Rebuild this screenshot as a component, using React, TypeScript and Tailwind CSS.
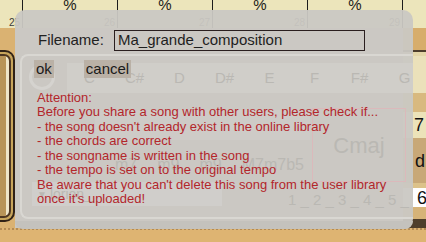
const cells = ["25", "26", "27", "28", "29"];
const chords = ["C", "C#", "D", "D#", "E", "F", "F#", "G"];
const notes = [
  "Attention:",
  "Before you share a song with other users, please check if...",
  "- the song doesn't already exist in the online library",
  "- the chords are correct",
  "- the songname is written in the song",
  "- the tempo is set on to the original tempo",
  "Be aware that you can't delete this song from the user library",
  "once it's uploaded!",
];

function TopRuler() {
  return (
    <div className="flex h-[28px] overflow-hidden bg-[#ece5bb]">
      <div className="-ml-[72px] flex">
        {cells.map((n) => (
          <div
            key={n}
            className="flex h-[28px] w-[95px] shrink-0 flex-col border-r border-[#1c1c1c]"
          >
            <span className="-mt-[3px] text-center text-[15px] leading-[15px] text-[#1a1a1a]">
              %
            </span>
            <span className="mr-[2px] mt-auto self-end text-[10px] leading-[10px] text-[#3a3a3a]">
              {n}
            </span>
          </div>
        ))}
      </div>
    </div>
  );
}

function LeftFrame() {
  return (
    <div className="flex w-[15px] flex-col bg-[#dab272]">
      <div className="h-[22px]" />
      <div className="h-[172px] w-[15px] rounded-r-[10px] border-y-2 border-r-2 border-[#2f2116] bg-[#c8a55b] py-[2px] pr-[2px]">
        <div className="h-full w-full rounded-r-[7px] border-y-2 border-r-2 border-[#4e3722] bg-[#efe6c9] pr-[2px]">
          <div className="h-full w-[6px] bg-[#b89458]" />
        </div>
      </div>
    </div>
  );
}

function RightColumn() {
  return (
    <div className="flex w-[23px] flex-col text-[18px] leading-none text-[#111]">
      <div className="h-[22px] bg-[#d7ad6b]" />
      <div className="h-[2px] bg-[#4d3d2c]" />
      <div className="h-[4px] bg-[#e4d6a8]" />
      <div className="h-[37px] bg-[#ebe1ba]" />
      <div className="h-[19px] bg-[#d8b97f]" />
      <div className="flex h-[26px] items-center bg-[#ece3b9] pl-[11px]">7</div>
      <div className="flex h-[45px] items-center bg-[#c8a877] pl-[12px]">d</div>
      <div className="h-[5px] bg-[#dcc28a]" />
      <div className="flex h-[19px] items-center bg-white pl-[14px]">6</div>
      <div className="h-[12px] bg-[#d6b378]" />
      <div className="h-[9px] bg-[#4e3e2c]" />
    </div>
  );
}

function GhostLayer() {
  return (
    <div className="pointer-events-none absolute inset-0 overflow-hidden whitespace-nowrap text-[#bab8b3]">
      <div className="absolute left-[7px] top-[8px] h-[26px] w-[26px] rounded-full border-[3px] border-[#d5d3cf]" />
      <div className="absolute left-[45px] right-0 top-[7px] flex h-[30px] items-center bg-[#d0cec9]">
        {chords.map((c) => (
          <span key={c} className="w-[45px] shrink-0 text-center text-[15px]">
            {c}
          </span>
        ))}
      </div>
      <div className="absolute left-[73px] top-[54px] h-[30px] w-[215px] bg-[#cecbc7]" />
      <div className="absolute left-[93px] top-[101px] flex gap-[20px] text-[16px] leading-none">
        <span>m7</span>
        <span>m9</span>
        <span>m9</span>
        <span>M7m7b5</span>
      </div>
      <div className="absolute left-[290px] top-[52px] flex h-[74px] w-[94px] items-center justify-center border-[1.5px] border-[#dbb9bb] text-[22px]">
        Cmaj
      </div>
      <div className="absolute left-[10px] top-[126px] flex h-[24px] w-[190px] items-center gap-[3px] bg-[#d0cecb] pl-[5px] text-[14px]">
        <span className="text-[10px]">▼</span>
        <span>lorion_</span>
      </div>
      <div className="absolute left-[266px] top-[136px] text-[15px] leading-none">
        1 _ 2 _ 3 _ 4 _ 5 _
      </div>
    </div>
  );
}

function ShareDialog() {
  return (
    <div className="absolute left-[15px] top-[10px] flex h-[219px] w-[398px] flex-col rounded-[10px] bg-[#cac8c3]/95 pt-[20px]">
      <div className="flex h-[21px] items-center pl-[23px]">
        <span className="w-[76px] text-[15px] text-[#222]">Filename:</span>
        <div className="flex h-[21px] w-[251px] items-center border border-[#2a1f1f] px-[3px] text-[15px] text-[#1e1e1e]">
          Ma_grande_composition
        </div>
      </div>
      <div className="relative ml-[5px] mt-[3px] h-[165px] rounded-l-[8px] border-y-2 border-l-2 border-[#d9d7d2]">
        <GhostLayer />
        <div className="relative pl-[12px] pt-[4px]">
          <div className="flex gap-[30px] text-[15px] leading-[18px] text-[#1a1a1a]">
            <button className="h-[18px] bg-[#bab1a6] px-[2px]">ok</button>
            <button className="h-[18px] bg-[#bab1a6] px-[2px]">cancel</button>
          </div>
          <div className="mt-[12.5px] pl-[3px] text-[13px] leading-[14.5px] text-[#b3262b]">
            {notes.map((line) => (
              <div key={line} className="whitespace-nowrap">
                {line}
              </div>
            ))}
          </div>
        </div>
      </div>
      <div className="mt-auto h-[8px] rounded-b-[10px] bg-[#c4c2bd]" />
    </div>
  );
}

export default function App() {
  return (
    <div className="relative h-[242px] w-[426px] overflow-hidden bg-[#dcb473] font-['Liberation_Sans',Arial,sans-serif]">
      <TopRuler />
      <div className="flex h-[200px]">
        <LeftFrame />
        <div className="flex-1 bg-[#cac8c3]" />
        <RightColumn />
      </div>
      <div className="h-[14px] border-t-2 border-dotted border-[#b38b55] bg-[#deb472]" />
      <ShareDialog />
    </div>
  );
}
